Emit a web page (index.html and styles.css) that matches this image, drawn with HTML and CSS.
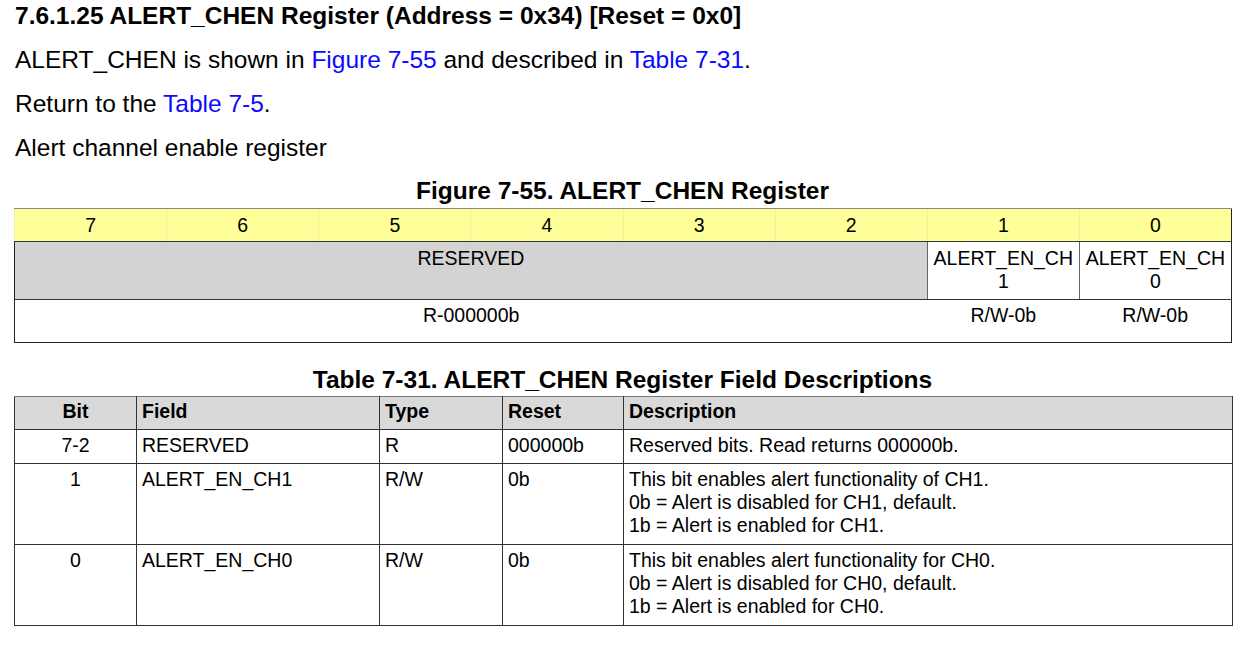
FILE: index.html
```html
<!DOCTYPE html>
<html>
<head>
<meta charset="utf-8">
<link rel="stylesheet" href="styles.css">
</head>
<body>
<div class="page">
  <h3 class="heading">7.6.1.25 ALERT_CHEN Register (Address = 0x34) [Reset = 0x0]</h3>
  <p class="para">ALERT_CHEN is shown in <a class="link">Figure 7-55</a> and described in <a class="link">Table 7-31</a>.</p>
  <p class="para">Return to the <a class="link">Table 7-5</a>.</p>
  <p class="para">Alert channel enable register</p>

  <div class="caption fig-caption">Figure 7-55. ALERT_CHEN Register</div>
  <table class="reg">
    <colgroup>
      <col class="rc"><col class="rc"><col class="rc"><col class="rc"><col class="rc"><col class="rc"><col class="rc"><col class="rc">
    </colgroup>
    <tr class="bits">
      <td>7</td><td>6</td><td>5</td><td>4</td><td>3</td><td>2</td><td>1</td><td>0</td>
    </tr>
    <tr class="fields">
      <td colspan="6" class="reserved">RESERVED</td>
      <td class="fld">ALERT_EN_CH<br>1</td>
      <td class="fld">ALERT_EN_CH<br>0</td>
    </tr>
    <tr class="access">
      <td colspan="6">R-000000b</td>
      <td>R/W-0b</td>
      <td>R/W-0b</td>
    </tr>
  </table>

  <div class="caption tbl-caption">Table 7-31. ALERT_CHEN Register Field Descriptions</div>
  <table class="desc">
    <colgroup>
      <col class="c-bit"><col class="c-field"><col class="c-type"><col class="c-reset"><col class="c-desc">
    </colgroup>
    <tr class="hdr">
      <th class="center">Bit</th><th>Field</th><th>Type</th><th>Reset</th><th>Description</th>
    </tr>
    <tr>
      <td class="center">7-2</td><td>RESERVED</td><td>R</td><td>000000b</td><td>Reserved bits. Read returns 000000b.</td>
    </tr>
    <tr class="multi">
      <td class="center">1</td><td>ALERT_EN_CH1</td><td>R/W</td><td>0b</td>
      <td>This bit enables alert functionality of CH1.<br>0b = Alert is disabled for CH1, default.<br>1b = Alert is enabled for CH1.</td>
    </tr>
    <tr class="multi">
      <td class="center">0</td><td>ALERT_EN_CH0</td><td>R/W</td><td>0b</td>
      <td>This bit enables alert functionality for CH0.<br>0b = Alert is disabled for CH0, default.<br>1b = Alert is enabled for CH0.</td>
    </tr>
  </table>
</div>
</body>
</html>
```

FILE: styles.css
```css
html, body {
  margin: 0;
  padding: 0;
  background: #ffffff;
}
body {
  font-family: "Liberation Sans", Arial, sans-serif;
  color: #000;
}
.page {
  padding: 2px 15px 0 15px;
  width: 1217px;
}
.heading {
  margin: 0;
  font-size: 24.5px;
  font-weight: bold;
  line-height: 28px;
}
.para {
  margin: 0;
  font-size: 24.5px;
  line-height: 44px;
}
.heading + .para {
  margin-top: 8px;
}
.link {
  color: #0a0aff;
  text-decoration: none;
}
.caption {
  text-align: center;
  font-weight: bold;
  font-size: 24.5px;
  line-height: 28px;
}
.fig-caption {
  margin-top: 7px;
  margin-left: -2px;
}
.reg {
  width: 1218px;
  margin-left: -1px;
  margin-top: 3px;
  border-collapse: collapse;
  table-layout: fixed;
  font-size: 19.5px;
  border: 1px solid #222;
}
.reg .rc {
  width: 12.5%;
}
.reg td {
  text-align: center;
  padding: 0;
}
.reg .bits td {
  background: #ffff99;
  height: 32px;
  border-top: 1px solid #888;
  border-left: 1px solid #f0f0a0;
  border-bottom: 1px solid #333;
  line-height: 23px;
  vertical-align: middle;
}
.reg .fields td {
  height: 52px;
  vertical-align: top;
  line-height: 23px;
  padding-top: 5px;
  border-bottom: 1px solid #333;
}
.reg .fields .reserved {
  background: #d3d3d3;
}
.reg .fields .fld {
  border-left: 1px solid #666;
  background: #fff;
}
.reg .access td {
  height: 38px;
  vertical-align: top;
  padding-top: 4px;
  line-height: 23px;
}
.tbl-caption {
  margin-top: 23px;
  margin-left: -2px;
}
.desc {
  width: 1219px;
  margin-left: -1px;
  margin-top: 2px;
  border-collapse: collapse;
  table-layout: fixed;
  font-size: 19.5px;
}
.desc .c-bit { width: 122px; }
.desc .c-field { width: 243px; }
.desc .c-type { width: 123px; }
.desc .c-reset { width: 121px; }
.desc th, .desc td {
  border: 1px solid #333;
  text-align: left;
  vertical-align: top;
  padding: 4px 5px 6px 5px;
  line-height: 23px;
}
.desc .multi td {
  padding-bottom: 7px;
}
.desc th {
  background: #d9d9d9;
  font-weight: bold;
  border-top-color: #777;
  padding-top: 3px;
  padding-bottom: 6px;
}
.desc .center {
  text-align: center;
}
```
